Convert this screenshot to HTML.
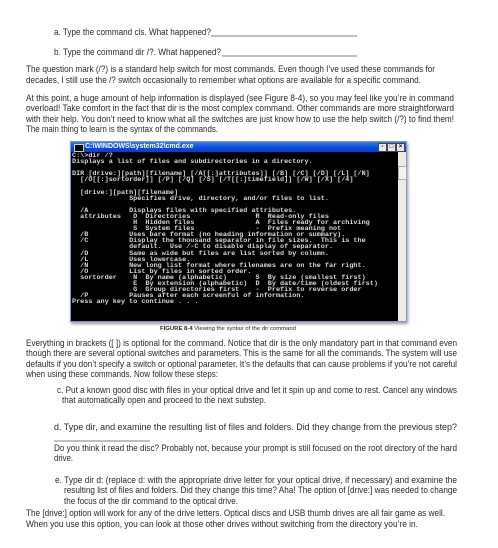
<!DOCTYPE html>
<html><head><style>
html,body{margin:0;padding:0;background:#fff;width:498px;height:548px;overflow:hidden;position:relative}
svg.t{position:absolute;left:0;top:0}
svg.t text{font-family:"Liberation Sans",sans-serif;font-size:8.8px;fill:#2a2a2a}
#win{position:absolute;left:70px;top:141px;width:335px;height:179px;background:#000;box-shadow:1px 2px 3px #999;border:1px solid #7a96df}
#tb{position:absolute;left:0;top:0;right:0;height:10px;background:linear-gradient(#3a7bf0,#0a4ad8 60%,#0b3fc0);color:#fff;font-family:"Liberation Sans",sans-serif;font-size:7px;font-weight:bold;line-height:10px;padding-left:14px}
#tb .ic{position:absolute;left:3px;top:2px;width:8px;height:6px;background:#000;border:1px solid #ccc}
.bt{position:absolute;top:1px;width:7px;height:7px;background:#e8e8e8;border:0.5px solid #444;font-size:6px;line-height:7px;text-align:center;color:#000}
#con{position:absolute;left:1px;top:11px;width:325px;font-family:"Liberation Mono",monospace;font-size:6.8px;line-height:6.1px;color:#d8d8d8;font-weight:bold;white-space:pre}
#sb{position:absolute;right:0;top:10px;width:8px;bottom:0;background:#ecebe4}
#sb .th{position:absolute;top:14px;left:0;width:7px;height:12px;background:#f3f3f0;border:0.5px solid #aaa}
</style></head><body>
<div id="win">
<div id="tb"><span class="ic"></span>C:\WINDOWS\system32\cmd.exe
<span class="bt" style="right:19px">-</span><span class="bt" style="right:10px">□</span><span class="bt" style="right:1px;font-weight:bold">×</span></div>
<div id="con">C:\&gt;dir /?
Displays a list of files and subdirectories in a directory.

DIR [drive:][path][filename] [/A[[:]attributes]] [/B] [/C] [/D] [/L] [/N]
  [/O[[:]sortorder]] [/P] [/Q] [/S] [/T[[:]timefield]] [/W] [/X] [/4]

  [drive:][path][filename]
              Specifies drive, directory, and/or files to list.

  /A          Displays files with specified attributes.
  attributes   D  Directories                R  Read-only files
               H  Hidden files               A  Files ready for archiving
               S  System files               -  Prefix meaning not
  /B          Uses bare format (no heading information or summary).
  /C          Display the thousand separator in file sizes.  This is the
              default.  Use /-C to disable display of separator.
  /D          Same as wide but files are list sorted by column.
  /L          Uses lowercase.
  /N          New long list format where filenames are on the far right.
  /O          List by files in sorted order.
  sortorder    N  By name (alphabetic)       S  By size (smallest first)
               E  By extension (alphabetic)  D  By date/time (oldest first)
               G  Group directories first    -  Prefix to reverse order
  /P          Pauses after each screenful of information.
Press any key to continue . . .</div>
<div id="sb"><div class="th"></div></div>
</div>
<svg class="t" width="498" height="548" viewBox="0 0 498 548">
<text x="54" y="35" textLength="157" lengthAdjust="spacingAndGlyphs" fill="#444">a. Type the command cls. What happened?</text>
<line x1="211" y1="36" x2="357" y2="36" stroke="#555" stroke-width="0.8"/>
<text x="54" y="55" textLength="167" lengthAdjust="spacingAndGlyphs">b. Type the command dir /?. What happened?</text>
<line x1="222" y1="56" x2="357" y2="56" stroke="#555" stroke-width="0.8"/>

<text x="26" y="72" textLength="409" lengthAdjust="spacingAndGlyphs">The question mark (/?) is a standard help switch for most commands. Even though I’ve used these commands for</text>
<text x="26" y="83" textLength="395" lengthAdjust="spacingAndGlyphs">decades, I still use the /? switch occasionally to remember what options are available for a specific command.</text>

<text x="26" y="101" textLength="428" lengthAdjust="spacingAndGlyphs">At this point, a huge amount of help information is displayed (see Figure 8-4), so you may feel like you’re in command</text>
<text x="26" y="111" textLength="428" lengthAdjust="spacingAndGlyphs">overload! Take comfort in the fact that dir is the most complex command. Other commands are more straightforward</text>
<text x="26" y="122" textLength="428" lengthAdjust="spacingAndGlyphs">with their help. You don’t need to know what all the switches are just know how to use the help switch (/?) to find them!</text>
<text x="26" y="132" textLength="192" lengthAdjust="spacingAndGlyphs">The main thing to learn is the syntax of the commands.</text>

<text x="160" y="330" textLength="136" lengthAdjust="spacingAndGlyphs" style="font-size:5px"><tspan font-weight="bold">FIGURE 8-4</tspan>  Viewing the syntax of the dir command</text>

<text x="26" y="346" textLength="431" lengthAdjust="spacingAndGlyphs">Everything in brackets ([ ]) is optional for the command. Notice that dir is the only mandatory part in that command even</text>
<text x="26" y="356" textLength="431" lengthAdjust="spacingAndGlyphs">though there are several optional switches and parameters. This is the same for all the commands. The system will use</text>
<text x="26" y="367" textLength="431" lengthAdjust="spacingAndGlyphs">defaults if you don’t specify a switch or optional parameter. It’s the defaults that can cause problems if you’re not careful</text>
<text x="26" y="377" textLength="192" lengthAdjust="spacingAndGlyphs">when using these commands. Now follow these steps:</text>

<text x="57" y="393" textLength="400" lengthAdjust="spacingAndGlyphs">c. Put a known good disc with files in your optical drive and let it spin up and come to rest. Cancel any windows</text>
<text x="62" y="403" textLength="204" lengthAdjust="spacingAndGlyphs">that automatically open and proceed to the next substep.</text>

<text x="54" y="430" textLength="403" lengthAdjust="spacingAndGlyphs">d. Type dir, and examine the resulting list of files and folders. Did they change from the previous step?</text>
<line x1="54" y1="441" x2="150" y2="441" stroke="#555" stroke-width="0.8"/>
<text x="54" y="451" textLength="403" lengthAdjust="spacingAndGlyphs">Do you think it read the disc? Probably not, because your prompt is still focused on the root directory of the hard</text>
<text x="54" y="461" textLength="19" lengthAdjust="spacingAndGlyphs">drive.</text>

<text x="55" y="483" textLength="402" lengthAdjust="spacingAndGlyphs">e. Type dir d: (replace d: with the appropriate drive letter for your optical drive, if necessary) and examine the</text>
<text x="64" y="493" textLength="393" lengthAdjust="spacingAndGlyphs">resulting list of files and folders. Did they change this time? Aha! The option of [drive:] was needed to change</text>
<text x="64" y="504" textLength="174" lengthAdjust="spacingAndGlyphs">the focus of the dir command to the optical drive.</text>

<text x="26" y="516" textLength="419" lengthAdjust="spacingAndGlyphs">The [drive:] option will work for any of the drive letters. Optical discs and USB thumb drives are all fair game as well.</text>
<text x="26" y="527" textLength="392" lengthAdjust="spacingAndGlyphs">When you use this option, you can look at those other drives without switching from the directory you’re in.</text>
</svg>
</body></html>
